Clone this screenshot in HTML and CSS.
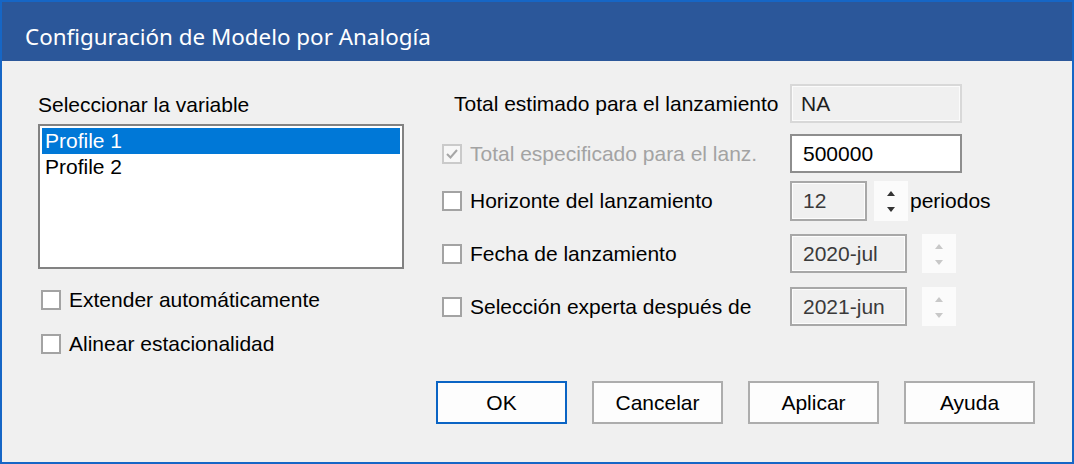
FILE: index.html
```html
<!DOCTYPE html>
<html lang="es">
<head>
<meta charset="utf-8">
<title>Configuración de Modelo por Analogía</title>
<link rel="stylesheet" href="styles.css">
</head>
<body>
<div class="window">
  <div class="titlebar"><span class="title">Configuración de Modelo por Analogía</span></div>
  <div class="content">
    <div class="main">
      <div class="left">
        <div class="label">Seleccionar la variable</div>
        <div class="listbox">
          <div class="item selected">Profile 1</div>
          <div class="item">Profile 2</div>
        </div>
        <div class="check first"><span class="box"></span><span>Extender automáticamente</span></div>
        <div class="check second"><span class="box"></span><span>Alinear estacionalidad</span></div>
      </div>
      <div class="right">
        <div class="row r1">
          <div class="rlabel plain">Total estimado para el lanzamiento</div>
          <div class="field ro wide">NA</div>
        </div>
        <div class="row r2">
          <div class="rlabel"><span class="box disabled"><svg width="16" height="16" viewBox="0 0 16 16"><polyline points="3,8 6.5,11.5 13,4" fill="none" stroke="#a6a6a6" stroke-width="2"/></svg></span><span class="dis-text">Total especificado para el lanz.</span></div>
          <div class="field edit wide">500000</div>
        </div>
        <div class="row r3">
          <div class="rlabel"><span class="box"></span><span>Horizonte del lanzamiento</span></div>
          <div class="field dim num">12</div>
          <div class="spin en"><svg width="34" height="40" viewBox="0 0 34 40"><polygon points="13,15 21,15 17,10" fill="#333"/><polygon points="13,26 21,26 17,31" fill="#333"/></svg></div>
          <span class="suffix">periodos</span>
        </div>
        <div class="row r4">
          <div class="rlabel"><span class="box"></span><span>Fecha de lanzamiento</span></div>
          <div class="field dim date">2020-jul</div>
          <div class="spin dis"><svg width="34" height="39" viewBox="0 0 34 39"><polygon points="13,15 21,15 17,10" fill="#c8c8c8"/><polygon points="13,26 21,26 17,31" fill="#c8c8c8"/></svg></div>
        </div>
        <div class="row r5">
          <div class="rlabel"><span class="box"></span><span>Selección experta después de</span></div>
          <div class="field dim date">2021-jun</div>
          <div class="spin dis"><svg width="34" height="39" viewBox="0 0 34 39"><polygon points="13,15 21,15 17,10" fill="#c8c8c8"/><polygon points="13,26 21,26 17,31" fill="#c8c8c8"/></svg></div>
        </div>
      </div>
    </div>
    <div class="buttons">
      <button class="btn default">OK</button>
      <button class="btn">Cancelar</button>
      <button class="btn">Aplicar</button>
      <button class="btn">Ayuda</button>
    </div>
  </div>
</div>
</body>
</html>
```

FILE: styles.css
```css
body {
  margin: 0;
  background: #f0f0f0;
  font-family: "Liberation Sans", Arial, sans-serif;
  font-size: 21px;
  color: #000;
}

.window {
  width: 1074px;
  height: 464px;
  box-sizing: border-box;
  border: 2px solid #1666c6;
  background: #f0f0f0;
  display: flex;
  flex-direction: column;
}

.titlebar {
  height: 59px;
  flex: none;
  box-sizing: border-box;
  background: #2b579a;
  color: #fff;
  font-family: "Noto Sans", "Open Sans", sans-serif;
  font-size: 22.4px;
  line-height: 24px;
  padding: 23px 0 0 23px;
}

.content {
  flex: 1;
  display: flex;
  flex-direction: column;
}

.main {
  display: flex;
  padding: 23px 0 0 36px;
}

.left {
  width: 366px;
  padding-top: 9px;
  display: flex;
  flex-direction: column;
}

.label {
  line-height: 24px;
}

.listbox {
  margin-top: 7px;
  height: 145px;
  box-sizing: border-box;
  border: 2px solid #828282;
  background: #fff;
  padding: 2px;
}

.item {
  height: 26px;
  line-height: 26px;
  padding-left: 3px;
}

.item.selected {
  background: #0078d7;
  color: #fff;
}

.check {
  display: flex;
  align-items: center;
  gap: 8px;
  line-height: 24px;
  margin-left: 3px;
}

.check.first { margin-top: 19px; }
.check.second { margin-top: 20px; }

.box {
  width: 20px;
  height: 20px;
  box-sizing: border-box;
  border: 2px solid #a3a3a3;
  background: #fff;
  flex: none;
  display: flex;
}

.box.disabled {
  border-color: #cacaca;
  background: #f7f7f7;
}

.dis-text {
  color: #a3a3a3;
}

.right {
  margin-left: 38px;
  display: flex;
  flex-direction: column;
}

.row {
  display: flex;
  align-items: center;
  height: 39px;
}

.r2 { margin-top: 11px; }
.r3 { margin-top: 8px; height: 40px; }
.r4 { margin-top: 13px; }
.r5 { margin-top: 14px; }

.rlabel {
  width: 348px;
  flex: none;
  box-sizing: border-box;
  display: flex;
  align-items: center;
  gap: 8px;
  line-height: 24px;
}

.rlabel.plain {
  padding-left: 12px;
}

.field {
  height: 100%;
  box-sizing: border-box;
  border: 2px solid #8e8e8e;
  padding-left: 9px;
  display: flex;
  align-items: center;
  flex: none;
}

.field.wide { width: 172px; }
.field.num { width: 77px; }
.field.date { width: 117px; }

.field.ro {
  border-color: #d8d8d8;
  box-shadow: inset 0 0 0 1px #fbfbfb;
  background: #f0f0f0;
  color: #1e1e1e;
}

.field.edit {
  border-color: #8e8e8e;
  background: #fff;
  padding-left: 11px;
}

.field.dim {
  border-color: #a8a8a8;
  box-shadow: inset 0 0 0 1px #fdfdfd;
  background: #f0f0f0;
  color: #3a3a3a;
  padding-left: 11px;
}

.spin {
  width: 34px;
  height: 100%;
  background: #fbfbfb;
  flex: none;
}

.spin.en { margin-left: 7px; }
.spin.dis { margin-left: 15px; }

.suffix {
  margin-left: 2px;
  line-height: 24px;
}

.buttons {
  display: flex;
  justify-content: flex-end;
  gap: 25px;
  padding-right: 37px;
  margin-top: 25px;
}

.btn {
  width: 131px;
  height: 43px;
  box-sizing: border-box;
  border: 2px solid #adadad;
  background: #fdfdfd;
  font: inherit;
  color: #000;
  padding: 0;
  margin: 0;
  display: flex;
  align-items: center;
  justify-content: center;
}

.btn.default {
  border-color: #0a64c4;
}
```
